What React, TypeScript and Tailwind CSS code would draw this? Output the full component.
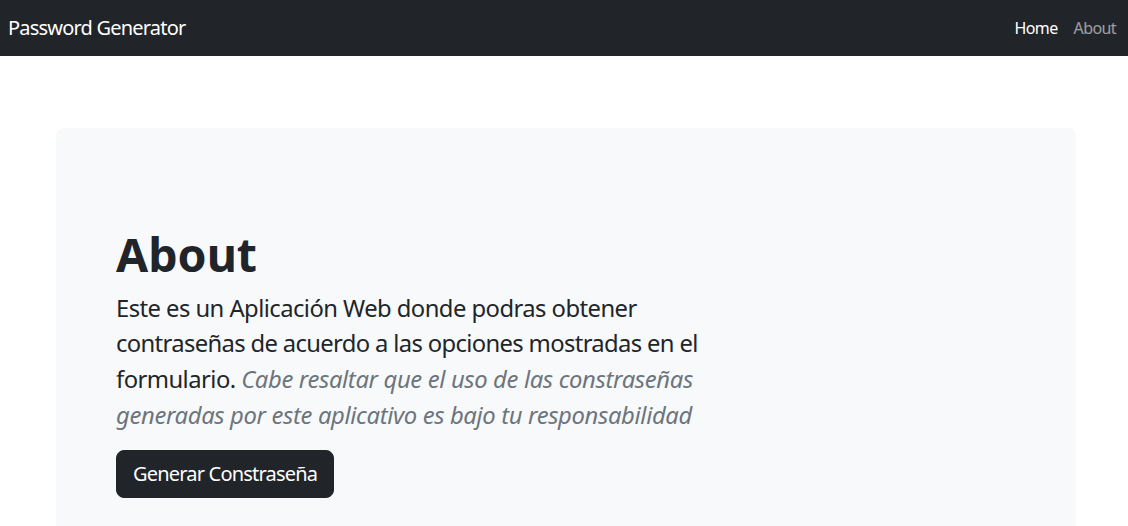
import React from "react";

export default function App() {
  const font = { fontFamily: '"Segoe UI", "Noto Sans", "Liberation Sans", sans-serif' };
  return (
    <div className="min-h-[526px] bg-white text-[#212529]" style={font}>
      <nav className="h-14 bg-[#212529] flex items-center justify-between pl-2 pr-[4px]">
        <span className="text-[20px] text-white leading-[30px] tracking-[-0.8px]">Password Generator</span>
        <div className="flex items-center text-[16px] leading-6 tracking-[-0.6px]">
          <a className="text-white px-2">Home</a>
          <a className="text-white/55 px-2">About</a>
        </div>
      </nav>
      <div className="pl-[56px] pr-[52px] pt-[72px]">
        <div className="bg-[#f8f9fa] rounded-lg px-[60px] pt-[96px] pb-[96px]">
          <h1 className="text-[46.5px] font-bold leading-[1.2] mb-2 mt-[3px]">About</h1>
          <p className="text-[23.8px] leading-[1.5] w-[600px] mb-4 tracking-[-0.55px] whitespace-nowrap">
            Este es un Aplicación Web donde podras obtener
            <br />
            <span className="tracking-[-0.65px]">contraseñas de acuerdo a las opciones mostradas en el</span>
            <br />
            formulario.{" "}
            <em className="text-[#6c757d] tracking-[-0.35px]">
              Cabe resaltar que el uso de las constraseñas
              <br />
              generadas por este aplicativo es bajo tu responsabilidad
            </em>
          </p>
          <button className="bg-[#212529] border border-[#212529] text-white text-[20px] leading-[1.5] px-4 py-2 rounded-lg tracking-[-0.8px]">
            Generar Constraseña
          </button>
        </div>
      </div>
    </div>
  );
}
